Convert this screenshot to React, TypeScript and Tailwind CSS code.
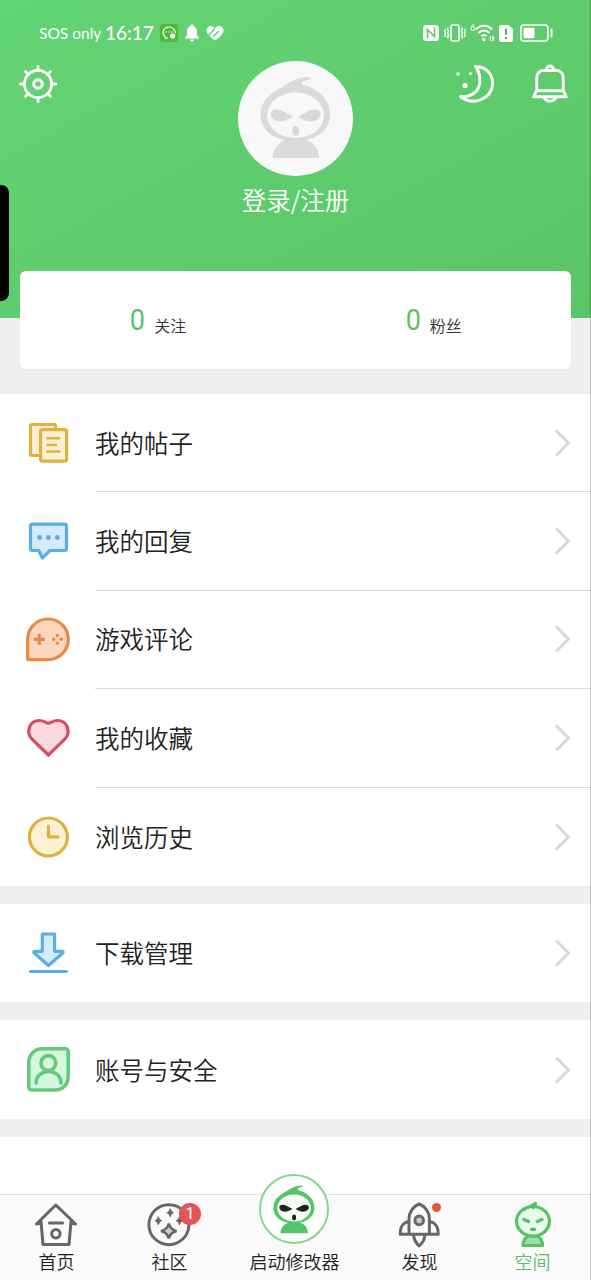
import type { ReactNode } from "react";
import { clsx } from "clsx";

interface MenuItem {
  id: string;
  label: string;
  icon: ReactNode;
}

interface MascotProps {
  className?: string;
  outline: string;
  face: string;
  features: string;
}

function Mascot({ className, outline, face, features }: MascotProps) {
  return (
    <svg viewBox="0 0 115 115" className={className}>
      <path
        d="M34.500 97c0-9 6-15.500 13-18h20.500c8 2.500 13 9 13 18z"
        fill={outline}
      />
      <path
        d="M23.500 60C20 45 28 35 41 28C49 23.500 56 16.500 70 16C73.500 16 73 18.500 70.500 18.800C66.500 19.300 63.500 20.500 64 23.500C78 27 91 36 92 52C93 69 78 80 57.500 80C40 80 27 73 23.500 60z"
        fill={outline}
      />
      <ellipse cx="57.600" cy="54.200" rx="28.400" ry="22.900" fill={face} />
      <path d="M32.700 53C32.700 47.500 41 47 47 51.500L55 56L49 58.800C41 62.500 32.700 59 32.700 53z" fill={features} />
      <path d="M82.700 53C82.700 47.500 74 47 68 51.500L60 56L66 58.800C74 62.500 82.700 59 82.700 53z" fill={features} />
      <ellipse cx="57.700" cy="70" rx="3.400" ry="5" fill={features} />
    </svg>
  );
}

function PostsIcon() {
  return (
    <svg viewBox="0 0 48 48" className="size-12" fill="#fdf0d5" stroke="#e0b23f" strokeWidth="3.200" strokeLinecap="round" strokeLinejoin="round">
      <path d="M16 36.500H8a1.500 1.500 0 0 1-1.500-1.500V7a1.500 1.500 0 0 1 1.500-1.500H30a1.500 1.500 0 0 1 1.500 1.500V11" />
      <rect x="16.600" y="10.600" width="26" height="31.500" rx="1.800" />
      <path d="M23.500 19.300H35M23.500 26H32M23.500 32.500H35.500" strokeWidth="2.500" />
    </svg>
  );
}

function RepliesIcon() {
  return (
    <svg viewBox="0 0 48 48" className="size-12" fill="#d3ebfb" stroke="#5aaee4" strokeWidth="3.200" strokeLinejoin="round">
      <path d="M8.500 6.100H40.500a2 2 0 0 1 2 2V30.500a2 2 0 0 1-2 2H26L18.300 40L14.800 32.500H8.500a2 2 0 0 1-2-2V8.100a2 2 0 0 1 2-2z" />
      <g fill="#5aaee4" stroke="none">
        <circle cx="15.600" cy="19.500" r="2.400" />
        <circle cx="24.400" cy="19.500" r="2.400" />
        <circle cx="33.300" cy="19.500" r="2.400" />
      </g>
    </svg>
  );
}

function GameIcon() {
  return (
    <svg viewBox="0 0 48 48" className="size-12" fill="#fbd6bd" stroke="#e58a49" strokeWidth="3.200" strokeLinejoin="round">
      <path d="M3.700 43.600V23.300A20.300 20.300 0 1 1 24 43.600z" />
      <path d="M15.300 17.800V28.800M9.800 23.300H20.800" />
      <g fill="#e58a49" stroke="none">
        <circle cx="33.400" cy="19.500" r="1.700" />
        <circle cx="33.400" cy="27.100" r="1.700" />
        <circle cx="29.600" cy="23.300" r="1.700" />
        <circle cx="37.200" cy="23.300" r="1.700" />
      </g>
    </svg>
  );
}

function FavoritesIcon() {
  return (
    <svg viewBox="0 0 48 48" className="size-12" fill="#fadadd" stroke="#d94c62" strokeWidth="3.200">
      <path d="M24.400 41L8 25.200C2 19.200 4.500 6.500 15.500 6.500C20 6.500 22 9.200 24.400 9.200C26.800 9.200 29 6.500 33.300 6.500C44.300 6.500 46.800 19.200 40.800 25.200z" />
    </svg>
  );
}

function HistoryIcon() {
  return (
    <svg viewBox="0 0 48 48" className="size-12" fill="#fdf0d5" stroke="#dfb13d" strokeWidth="3.200" strokeLinecap="round" strokeLinejoin="round">
      <circle cx="24.400" cy="24" r="19" />
      <path d="M24.400 13V23.800H34" fill="none" />
    </svg>
  );
}

function DownloadIcon() {
  return (
    <svg viewBox="0 0 48 48" className="size-12" fill="#d3ebfb" stroke="#5aaee4" strokeWidth="3.200" strokeLinecap="round" strokeLinejoin="round">
      <path d="M18.300 5H30.600V22.300H38.500Q39.500 23 38.800 24L24.400 36.500L10.200 24Q9.500 23 10.500 22.300H18.300z" />
      <path d="M6.500 42.500H42.500" />
    </svg>
  );
}

function AccountIcon() {
  return (
    <svg viewBox="0 0 48 48" className="size-12" fill="#d5f7dd" stroke="#62cb7a" strokeWidth="3.600" strokeLinecap="round">
      <path d="M18 2.800H41.500a2.700 2.700 0 0 1 2.700 2.700V31a13 13 0 0 1-13 13H7.500a2.700 2.700 0 0 1-2.700-2.700V16A13.200 13.200 0 0 1 18 2.800z" />
      <path d="M12 37.300C12 21.500 37 21.500 37 37.300" fill="none" />
      <circle cx="24.400" cy="17" r="7.400" />
    </svg>
  );
}

const menuGroups: MenuItem[][] = [
  [
    { id: "posts", label: "我的帖子", icon: <PostsIcon /> },
    { id: "replies", label: "我的回复", icon: <RepliesIcon /> },
    { id: "reviews", label: "游戏评论", icon: <GameIcon /> },
    { id: "favorites", label: "我的收藏", icon: <FavoritesIcon /> },
    { id: "history", label: "浏览历史", icon: <HistoryIcon /> },
  ],
  [{ id: "downloads", label: "下载管理", icon: <DownloadIcon /> }],
  [{ id: "account", label: "账号与安全", icon: <AccountIcon /> }],
];

function StatusBar() {
  return (
    <div className="flex h-[61px] items-center justify-between pt-[5px] pr-[38px] pl-[39px] font-[Lato,'Noto_Sans',sans-serif] text-white">
      <div className="flex items-center">
        <span className="w-[66px] text-[15.5px] leading-5 whitespace-nowrap">SOS only</span>
        <span className="w-[55px] text-[19px] leading-5 font-medium whitespace-nowrap">16:17</span>
        <svg viewBox="0 0 18 18" className="size-[18px]">
          <rect width="18" height="18" rx="3" fill="#50b93b" />
          <path d="M5 14.500V12.500A6 5.500 0 1 1 15 9.500M5 14.500L8 13.700" fill="none" stroke="#fff" strokeWidth="1.100" />
          <path d="M5.500 8h1.500M8.300 8h1.500M11 8h1.500" stroke="#fff" />
          <circle cx="12.600" cy="12" r="2.600" fill="#fff" />
        </svg>
        <svg viewBox="0 0 16 18" className="ml-1.5 h-[18px] w-4" fill="#fff">
          <path d="M8 .5C9 .5 9.500 1.200 9.500 2C12 3 13 5 13 7.500V11L15.300 14.500H.7L3 11V7.500C3 5 4 3 6.500 2C6.500 1.200 7 .5 8 .5zM6 15.500H10A2 2 0 0 1 6 15.500z" />
        </svg>
        <svg viewBox="0 0 18 18" className="ml-1.5 size-[18px]">
          <path d="M9 4.500C11.500.5 17.500 1.500 17.500 6.500C17.500 10 12.500 14 9 16.500C5.500 14 .5 10 .5 6.500C.5 1.500 6.500.5 9 4.500z" fill="#fff" />
          <path d="M2.500 11.500L8.800 4.800M7.200 12.800L12.800 7" fill="none" stroke="#60ce70" strokeWidth="1.400" />
        </svg>
      </div>
      <div className="flex items-center">
        <svg viewBox="0 0 16 16" className="size-4">
          <rect width="16" height="16" rx="3.500" fill="#fff" />
          <path d="M4.500 13.500V4.500L11.500 11.500V2.500" fill="none" stroke="#5fcd6f" strokeWidth="1.600" />
        </svg>
        <svg viewBox="0 0 22 18" className="ml-[5px] h-[18px] w-[22px]" fill="none" stroke="#fff" strokeWidth="1.700">
          <rect x="7" y="1" width="8" height="16" rx="1.500" />
          <path d="M4.500 3.500l-1 1.500 1 2-1 2 1 2-1 2 1 1.500M1.500 5l-.7 2 .7 2-.7 2 .7 2M17.500 3.500l1 1.500-1 2 1 2-1 2 1 2-1 1.500M20.500 5l.7 2-.7 2 .7 2-.7 2" strokeWidth="1.300" />
        </svg>
        <span className="-mt-2.5 ml-1 w-[5px] text-[9px] leading-3">6</span>
        <svg viewBox="0 0 20 18" className="h-[18px] w-5" fill="none" stroke="#fff" strokeWidth="2">
          <path d="M.8 5.500C5.500 .5 12.500 .5 17 5.500M3.500 9C7 5.500 11 5.500 14.500 9M6.300 12.200C8 10.700 10 10.700 11.500 12.200" />
          <circle cx="8.800" cy="15.500" r="1.700" fill="#fff" stroke="none" />
          <path d="M15.500 12v5M18 12v5M14 14.500h1.500M18 14.500h1.500" strokeWidth="1.200" />
        </svg>
        <svg viewBox="0 0 14 17" className="ml-1 h-[17px] w-3.5">
          <path d="M2.500 0H9.500L14 4V14.500A2.500 2.500 0 0 1 11.500 17H2.500A2.500 2.500 0 0 1 0 14.500V2.500A2.500 2.500 0 0 1 2.500 0z" fill="#fff" />
          <path d="M7 3.500V10M7 12V14" stroke="#4aa659" strokeWidth="1.800" />
        </svg>
        <svg viewBox="0 0 33 18" className="ml-[7px] h-[18px] w-[33px]">
          <rect x=".9" y="1" width="27" height="16" rx="3" fill="none" stroke="#fff" strokeWidth="1.600" />
          <rect x="3.500" y="3.700" width="11" height="10.600" rx="1" fill="#fff" />
          <path d="M31.500 5.500V12.500" stroke="#fff" strokeWidth="2" strokeLinecap="round" />
        </svg>
      </div>
    </div>
  );
}

function GearIcon() {
  return (
    <svg viewBox="0 0 38 38" className="size-[38px]" fill="none" stroke="#fff" strokeWidth="2.800">
      <circle cx="19" cy="19" r="13.600" />
      <circle cx="19" cy="19" r="4.300" strokeWidth="3" />
      <path d="M19 1.300V5M19 33V36.700M1.300 19H5M33 19H36.700M6.500 6.500L9.500 9.500M28.500 28.500L31.500 31.500M6.500 31.500L9.500 28.500M28.500 9.500L31.500 6.500" strokeLinecap="round" />
    </svg>
  );
}

function MoonIcon() {
  return (
    <svg viewBox="0 0 40 40" className="size-10" fill="none" stroke="#fff" strokeWidth="2.900" strokeLinejoin="round">
      <path d="M20.500 2.500C33 3 38.500 12 37.300 21.500C36 34 19 43 5.500 32.500C17 33.500 23.500 27 24.500 20C25.500 13 24 7 20.500 2.500z" />
      <g fill="#fff" stroke="none">
        <circle cx="10" cy="21.500" r="2.600" />
        <circle cx="3" cy="10" r="1.800" />
        <circle cx="15.500" cy="9.500" r="1.500" />
      </g>
    </svg>
  );
}

function BellIcon() {
  return (
    <svg viewBox="0 0 38 40" className="h-10 w-[38px]" fill="none" stroke="#fff" strokeWidth="2.900" strokeLinejoin="round">
      <path d="M5.800 26V13A6.500 6.500 0 0 1 12.300 6.500H25.700A6.500 6.500 0 0 1 32.200 13V26L35.300 32.800H2.700L5.800 26zM5 26.800H33" />
      <path d="M15.500 5.500C15.500 .8 22.500 .8 22.500 5.500M13 33.500C15 38.300 23 38.300 25 33.500" />
    </svg>
  );
}

function ProfileHeader() {
  return (
    <header className="h-[318px] bg-linear-to-br from-[#63d475] to-[#5ac567]">
      <StatusBar />
      <div className="grid grid-cols-[1fr_auto_1fr] px-[19px]">
        <button className="mt-1 self-start justify-self-start">
          <GearIcon />
        </button>
        <div className="size-[115px] overflow-hidden rounded-full bg-[#f8f8f8]">
          <Mascot className="size-full" outline="#dadada" face="#f8f8f8" features="#d8d8d8" />
        </div>
        <div className="mt-[3px] mr-[3px] flex gap-9 self-start justify-self-end">
          <MoonIcon />
          <BellIcon />
        </div>
      </div>
      <p className="mt-1.5 text-center text-[24.5px] leading-9 font-[350] text-white">登录/注册</p>
    </header>
  );
}

function Stat({ value, label }: { value: number; label: string }) {
  return (
    <div className="flex flex-1 items-center justify-center gap-2">
      <span className="scale-x-90 font-[Roboto,sans-serif] text-[30px] leading-none text-[#5dbf6d]">{value}</span>
      <span className="mt-2.5 text-base leading-6 font-[350] text-[#333]">{label}</span>
    </div>
  );
}

function MenuRow({ item, last }: { item: MenuItem; last: boolean }) {
  return (
    <li className="flex h-[98.4px] items-center pl-6">
      {item.icon}
      <div className={clsx("ml-[23px] flex h-full flex-1 items-center justify-between pr-5", !last && "border-b border-[#dcdcdc]")}>
        <span className="text-[24.5px] leading-9 font-[350] text-[#222]">{item.label}</span>
        <svg viewBox="0 0 17 28" className="h-7 w-[17px]" fill="none" stroke="#d8d8d8" strokeWidth="3">
          <path d="M2 1.500L14.500 14L2 26.500" />
        </svg>
      </div>
    </li>
  );
}

function HomeIcon() {
  return (
    <svg viewBox="0 0 48 48" className="size-12" fill="none" stroke="#666" strokeWidth="3" strokeLinejoin="round" strokeLinecap="round">
      <path d="M4.500 24L23.800 5L43.500 24M9 21.500L11 44.500H37L39 21.500M4.500 24L9 23M43.500 24L39 23M17.500 23H30.500" />
      <circle cx="23.900" cy="33.700" r="4.200" />
    </svg>
  );
}

function CommunityIcon() {
  return (
    <svg viewBox="0 0 48 48" className="size-12" fill="#666">
      <circle cx="23.900" cy="24.700" r="20" fill="none" stroke="#666" strokeWidth="2.900" />
      <path d="M25.200 8.500q.8 3.400 3.400 4.200q-2.600.8-3.400 4.200q-.8-3.400-3.400-4.200q2.600-.8 3.400-4.200zM13.300 16.500q.8 3.400 3.400 4.200q-2.600.8-3.400 4.200q-.8-3.400-3.400-4.200q2.600-.8 3.400-4.200zM34.500 16.500q.8 3.400 3.400 4.200q-2.600.8-3.400 4.200q-.8-3.400-3.400-4.200q2.600-.8 3.400-4.200z" stroke="#666" strokeWidth=".6" />
      <path d="M23.800 23.500Q25.300 29.500 31.500 31Q25.300 32.500 23.800 38.500Q22.300 32.500 16 31Q22.300 29.500 23.800 23.500z" fill="#ccc" stroke="#666" strokeWidth="2.600" />
    </svg>
  );
}

function RocketIcon() {
  return (
    <svg viewBox="0 0 48 48" className="size-12" fill="none" stroke="#666" strokeWidth="3" strokeLinejoin="round">
      <path d="M14 34.300V19C14 12 18.500 6 24.200 4C30 6 34.400 12 34.400 19V34.300zM14 21.500C8 22.500 5.200 26 5.200 34.300H14M34.400 21.500C40.400 22.500 43.200 26 43.200 34.300H34.400M18.600 35.500C19 39.500 21.500 43.500 24.200 46C27 43.500 29.500 39.500 29.800 35.500" />
      <circle cx="24.200" cy="20.400" r="4.300" fill="#ccc" />
    </svg>
  );
}

function SpaceIcon() {
  return (
    <svg viewBox="0 0 48 48" className="size-12" fill="#e9f9eb" stroke="#55c266" strokeWidth="3.200" strokeLinecap="round" strokeLinejoin="round">
      <path d="M15 45.500C15 40 18 37 21 36H28.500C31.500 37 34.500 40 34.500 45.500z" fill="#9ddfa8" />
      <ellipse cx="25" cy="21.300" rx="16.500" ry="14.800" />
      <path d="M16 9.500C20 6.500 24.500 6.500 27.500 3.500C27.500 5 26.500 6.500 25.500 7.500M15.800 19.500L20.500 21.500M34 19.500L29.200 21.500M23.500 29.300H26.700" fill="none" />
    </svg>
  );
}

function Tab({ label, active, children }: { label: string; active?: boolean; children: ReactNode }) {
  return (
    <div className="flex w-[113px] flex-col items-center pt-[5px]">
      <div className="relative mr-px">{children}</div>
      <span className={clsx("-mt-px text-[18px] leading-7 font-[350]", active ? "text-[#5abb69]" : "text-[#222]")}>{label}</span>
    </div>
  );
}

function TabBar() {
  return (
    <nav className="flex h-[86px] border-t border-[#dedede] bg-[#fafafa] pr-0.5">
      <Tab label="首页">
        <HomeIcon />
      </Tab>
      <Tab label="社区">
        <CommunityIcon />
        <span className="absolute top-[3px] -right-[8px] flex size-[22px] items-center justify-center rounded-full bg-[#e35557] font-[Roboto,sans-serif] text-base leading-none text-white">
          1
        </span>
      </Tab>
      <div className="-mt-[21px] flex flex-1 flex-col items-center">
        <div className="mr-px flex size-[70px] items-center justify-center rounded-full border-2 border-[#7fd890] bg-white">
          <Mascot className="mt-px size-[68px] shrink-0" outline="#56c568" face="#f7fcf7" features="#222" />
        </div>
        <span className="mt-[3px] text-[18px] leading-7 font-[350] whitespace-nowrap text-[#222]">启动修改器</span>
      </div>
      <Tab label="发现">
        <RocketIcon />
        <span className="absolute top-[3px] right-[2px] size-[9px] rounded-full bg-[#df583e]" />
      </Tab>
      <Tab label="空间" active>
        <SpaceIcon />
      </Tab>
    </nav>
  );
}

export default function App() {
  return (
    <div className="relative flex h-[1280px] w-[591px] flex-col overflow-hidden bg-[#efefef] font-['Noto_Sans_CJK_SC',sans-serif]">
      <ProfileHeader />
      <section className="relative mx-5 -mt-[47px] mb-[25px] flex h-[98px] rounded-md bg-white">
        <Stat value={0} label="关注" />
        <Stat value={0} label="粉丝" />
      </section>
      <main className="flex flex-1 flex-col gap-[18px]">
        {menuGroups.map((group) => (
          <ul key={group[0].id} className="bg-white">
            {group.map((item, index) => (
              <MenuRow key={item.id} item={item} last={index === group.length - 1} />
            ))}
          </ul>
        ))}
        <div className="flex-1 bg-white" />
      </main>
      <TabBar />
      <div className="absolute top-[185px] left-0 h-[116px] w-[9px] rounded-r-lg bg-black" />
      <div className="absolute top-0 right-0 h-full w-px bg-black/20" />
    </div>
  );
}
